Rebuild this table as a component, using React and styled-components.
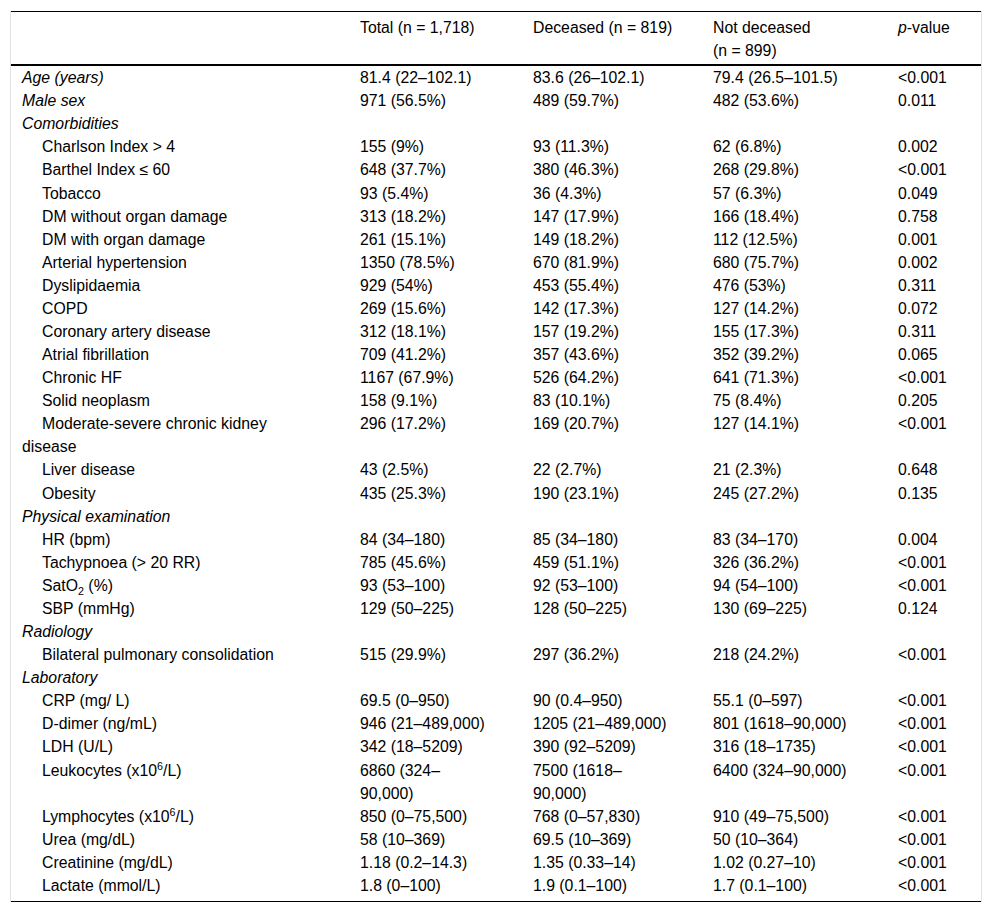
import React from "react";
import styled, { createGlobalStyle } from "styled-components";

const GlobalStyle = createGlobalStyle`
  body {
    margin: 0;
    background: #fff;
  }
`;

const Frame = styled.div`
  margin: 11px 10px 0 10px;
  width: 970px;
  border-left: 1px solid #e2e2e2;
  border-right: 1px solid #e2e2e2;
`;

const Table = styled.table`
  width: 970px;
  border-collapse: collapse;
  table-layout: fixed;
  font-family: "Liberation Sans", Arial, sans-serif;
  font-size: 15.8px;
  line-height: 23.08px;
  color: #000;
  border-top: 1px solid #000;
  border-bottom: 1px solid #000;
`;

const HeadRow = styled.tr`
  border-bottom: 2px solid #000;
`;

const Th = styled.th`
  text-align: left;
  vertical-align: top;
  font-weight: normal;
  padding: 4px 8px 2px 11px;
`;

const Td = styled.td`
  vertical-align: top;
  padding: 0 8px ${({ last }) => (last ? "4px" : "0")} 11px;
  font-style: ${({ italic }) => (italic ? "italic" : "normal")};
  text-indent: ${({ indent }) => (indent ? "20px" : "0")};
`;

const Sup = styled.sup`
  font-size: 0.68em;
  line-height: 0;
  vertical-align: 0.55em;
`;

const Sub = styled.sub`
  font-size: 0.68em;
  line-height: 0;
`;

const section = (label) => ({ label, section: true });
const item = (label, ...values) => ({ label, values, indent: true });

const rows = [
  { label: "Age (years)", italic: true, values: ["81.4 (22–102.1)", "83.6 (26–102.1)", "79.4 (26.5–101.5)", "<0.001"] },
  { label: "Male sex", italic: true, values: ["971 (56.5%)", "489 (59.7%)", "482 (53.6%)", "0.011"] },
  section("Comorbidities"),
  item("Charlson Index > 4", "155 (9%)", "93 (11.3%)", "62 (6.8%)", "0.002"),
  item("Barthel Index ≤ 60", "648 (37.7%)", "380 (46.3%)", "268 (29.8%)", "<0.001"),
  item("Tobacco", "93 (5.4%)", "36 (4.3%)", "57 (6.3%)", "0.049"),
  item("DM without organ damage", "313 (18.2%)", "147 (17.9%)", "166 (18.4%)", "0.758"),
  item("DM with organ damage", "261 (15.1%)", "149 (18.2%)", "112 (12.5%)", "0.001"),
  item("Arterial hypertension", "1350 (78.5%)", "670 (81.9%)", "680 (75.7%)", "0.002"),
  item("Dyslipidaemia", "929 (54%)", "453 (55.4%)", "476 (53%)", "0.311"),
  item("COPD", "269 (15.6%)", "142 (17.3%)", "127 (14.2%)", "0.072"),
  item("Coronary artery disease", "312 (18.1%)", "157 (19.2%)", "155 (17.3%)", "0.311"),
  item("Atrial fibrillation", "709 (41.2%)", "357 (43.6%)", "352 (39.2%)", "0.065"),
  item("Chronic HF", "1167 (67.9%)", "526 (64.2%)", "641 (71.3%)", "<0.001"),
  item("Solid neoplasm", "158 (9.1%)", "83 (10.1%)", "75 (8.4%)", "0.205"),
  item(
    <>
      Moderate-severe chronic kidney
      <br />
      disease
    </>,
    "296 (17.2%)",
    "169 (20.7%)",
    "127 (14.1%)",
    "<0.001"
  ),
  item("Liver disease", "43 (2.5%)", "22 (2.7%)", "21 (2.3%)", "0.648"),
  item("Obesity", "435 (25.3%)", "190 (23.1%)", "245 (27.2%)", "0.135"),
  section("Physical examination"),
  item("HR (bpm)", "84 (34–180)", "85 (34–180)", "83 (34–170)", "0.004"),
  item("Tachypnoea (> 20 RR)", "785 (45.6%)", "459 (51.1%)", "326 (36.2%)", "<0.001"),
  item(
    <>
      SatO<Sub>2</Sub> (%)
    </>,
    "93 (53–100)",
    "92 (53–100)",
    "94 (54–100)",
    "<0.001"
  ),
  item("SBP (mmHg)", "129 (50–225)", "128 (50–225)", "130 (69–225)", "0.124"),
  section("Radiology"),
  item("Bilateral pulmonary consolidation", "515 (29.9%)", "297 (36.2%)", "218 (24.2%)", "<0.001"),
  section("Laboratory"),
  item("CRP (mg/ L)", "69.5 (0–950)", "90 (0.4–950)", "55.1 (0–597)", "<0.001"),
  item("D-dimer (ng/mL)", "946 (21–489,000)", "1205 (21–489,000)", "801 (1618–90,000)", "<0.001"),
  item("LDH (U/L)", "342 (18–5209)", "390 (92–5209)", "316 (18–1735)", "<0.001"),
  item(
    <>
      Leukocytes (x10<Sup>6</Sup>/L)
    </>,
    <>
      6860 (324–
      <br />
      90,000)
    </>,
    <>
      7500 (1618–
      <br />
      90,000)
    </>,
    "6400 (324–90,000)",
    "<0.001"
  ),
  item(
    <>
      Lymphocytes (x10<Sup>6</Sup>/L)
    </>,
    "850 (0–75,500)",
    "768 (0–57,830)",
    "910 (49–75,500)",
    "<0.001"
  ),
  item("Urea (mg/dL)", "58 (10–369)", "69.5 (10–369)", "50 (10–364)", "<0.001"),
  item("Creatinine (mg/dL)", "1.18 (0.2–14.3)", "1.35 (0.33–14)", "1.02 (0.27–10)", "<0.001"),
  item("Lactate (mmol/L)", "1.8 (0–100)", "1.9 (0.1–100)", "1.7 (0.1–100)", "<0.001"),
];

const App = () => {
  return (
    <>
      <GlobalStyle />
      <Frame>
        <Table>
          <colgroup>
            <col style={{ width: 338 }} />
            <col style={{ width: 173 }} />
            <col style={{ width: 180 }} />
            <col style={{ width: 185 }} />
            <col style={{ width: 94 }} />
          </colgroup>
          <thead>
            <HeadRow>
              <Th />
              <Th>Total (n = 1,718)</Th>
              <Th>Deceased (n = 819)</Th>
              <Th>
                Not deceased
                <br />
                (n = 899)
              </Th>
              <Th>
                <i>p</i>-value
              </Th>
            </HeadRow>
          </thead>
          <tbody>
            {rows.map((row, i) => {
              const last = i === rows.length - 1;
              if (row.section) {
                return (
                  <tr key={i}>
                    <Td italic>{row.label}</Td>
                    <Td />
                    <Td />
                    <Td />
                    <Td />
                  </tr>
                );
              }
              return (
                <tr key={i}>
                  <Td italic={row.italic} indent={row.indent} last={last}>
                    {row.label}
                  </Td>
                  {row.values.map((v, j) => (
                    <Td key={j} last={last}>
                      {v}
                    </Td>
                  ))}
                </tr>
              );
            })}
          </tbody>
        </Table>
      </Frame>
    </>
  );
};

export default App;
